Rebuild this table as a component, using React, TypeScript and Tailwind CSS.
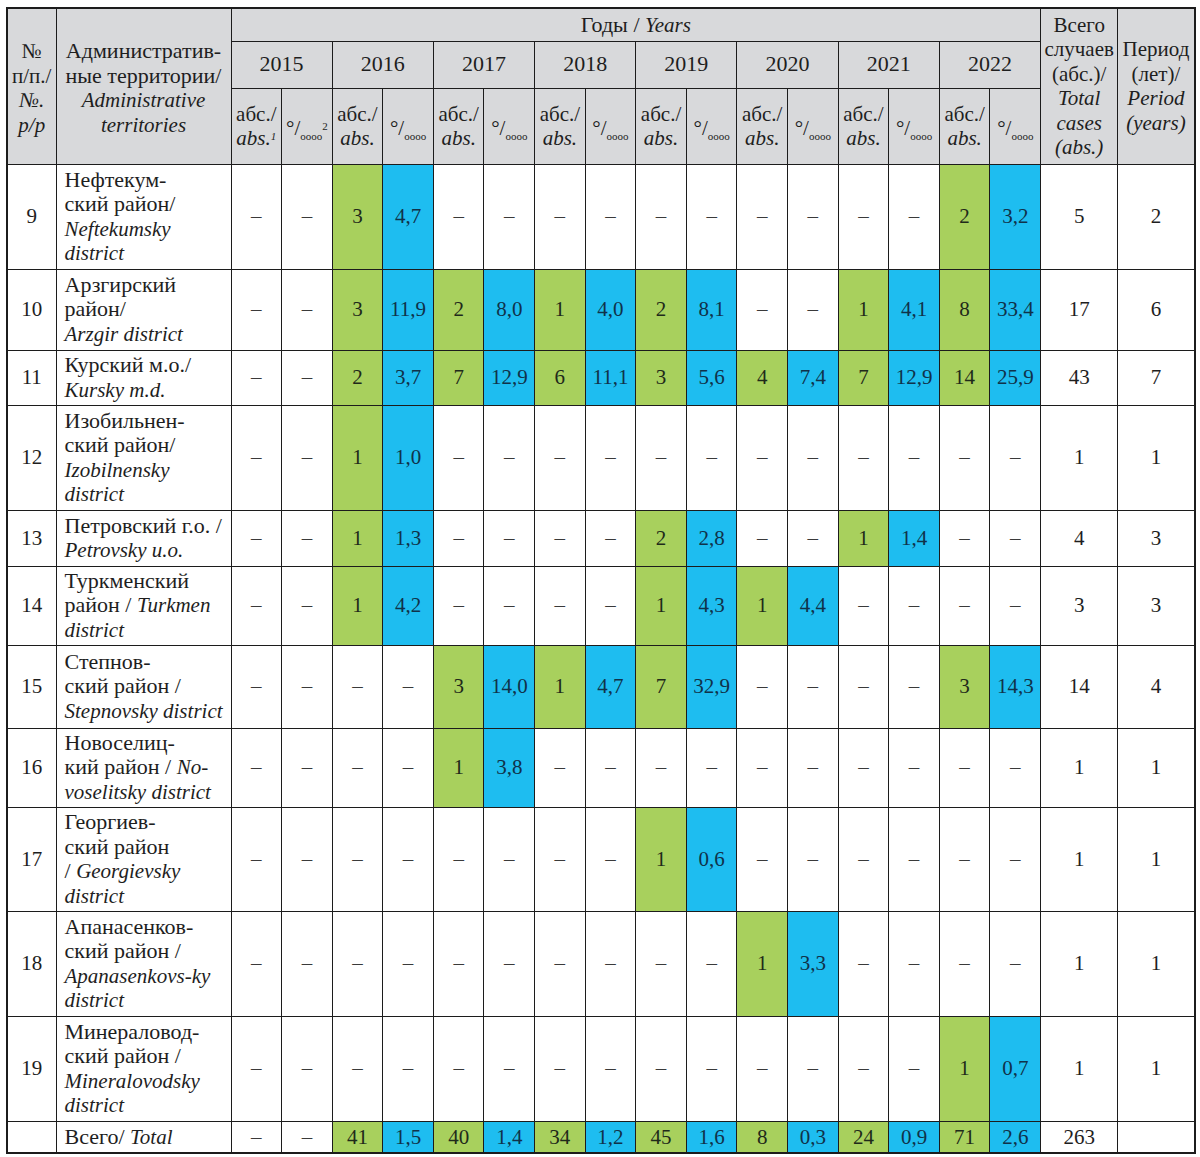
import React from "react";

type Pair = [string, string];

type Row = {
  num: string;
  name: React.ReactNode;
  h: string;
  years: Pair[];
  total: string;
  period: string;
};

const D: Pair = ["–", "–"];

// latin parts are italic and a touch smaller than the cyrillic
const it = (s: string) => <i className="text-[21px]">{s}</i>;

const rows: Row[] = [
  {
    num: "9",
    name: <>Нефтекум-<br />ский район/<br />{it("Neftekumsky")}<br />{it("district")}</>,
    h: "h-[105px]",
    years: [D, ["3", "4,7"], D, D, D, D, D, ["2", "3,2"]],
    total: "5",
    period: "2",
  },
  {
    num: "10",
    name: <>Арзгирский<br />район/<br />{it("Arzgir district")}</>,
    h: "h-[81px]",
    years: [D, ["3", "11,9"], ["2", "8,0"], ["1", "4,0"], ["2", "8,1"], D, ["1", "4,1"], ["8", "33,4"]],
    total: "17",
    period: "6",
  },
  {
    num: "11",
    name: <>Курский м.о./<br />{it("Kursky m.d.")}</>,
    h: "h-[55px]",
    years: [D, ["2", "3,7"], ["7", "12,9"], ["6", "11,1"], ["3", "5,6"], ["4", "7,4"], ["7", "12,9"], ["14", "25,9"]],
    total: "43",
    period: "7",
  },
  {
    num: "12",
    name: <>Изобильнен-<br />ский район/<br />{it("Izobilnensky")}<br />{it("district")}</>,
    h: "h-[105px]",
    years: [D, ["1", "1,0"], D, D, D, D, D, D],
    total: "1",
    period: "1",
  },
  {
    num: "13",
    name: <>Петровский г.о. /<br />{it("Petrovsky u.o.")}</>,
    h: "h-[56px]",
    years: [D, ["1", "1,3"], D, D, ["2", "2,8"], D, ["1", "1,4"], D],
    total: "4",
    period: "3",
  },
  {
    num: "14",
    name: <>Туркменский<br />район / {it("Turkmen")}<br />{it("district")}</>,
    h: "h-[79px]",
    years: [D, ["1", "4,2"], D, D, ["1", "4,3"], ["1", "4,4"], D, D],
    total: "3",
    period: "3",
  },
  {
    num: "15",
    name: <>Степнов-<br />ский район /<br />{it("Stepnovsky district")}</>,
    h: "h-[83px]",
    years: [D, D, ["3", "14,0"], ["1", "4,7"], ["7", "32,9"], D, D, ["3", "14,3"]],
    total: "14",
    period: "4",
  },
  {
    num: "16",
    name: <>Новоселиц-<br />кий район / {it("No-")}<br />{it("voselitsky district")}</>,
    h: "h-[79px]",
    years: [D, D, ["1", "3,8"], D, D, D, D, D],
    total: "1",
    period: "1",
  },
  {
    num: "17",
    name: <>Георгиев-<br />ский район<br />/ {it("Georgievsky")}<br />{it("district")}</>,
    h: "h-[104px]",
    years: [D, D, D, D, ["1", "0,6"], D, D, D],
    total: "1",
    period: "1",
  },
  {
    num: "18",
    name: <>Апанасенков-<br />ский район /<br />{it("Apanasenkovs-ky")}<br />{it("district")}</>,
    h: "h-[105px]",
    years: [D, D, D, D, D, ["1", "3,3"], D, D],
    total: "1",
    period: "1",
  },
  {
    num: "19",
    name: <>Минераловод-<br />ский район /<br />{it("Mineralovodsky")}<br />{it("district")}</>,
    h: "h-[105px]",
    years: [D, D, D, D, D, D, D, ["1", "0,7"]],
    total: "1",
    period: "1",
  },
];

const totals: Pair[] = [D, ["41", "1,5"], ["40", "1,4"], ["34", "1,2"], ["45", "1,6"], ["8", "0,3"], ["24", "0,9"], ["71", "2,6"]];

const yearsList = ["2015", "2016", "2017", "2018", "2019", "2020", "2021", "2022"];

const bd = "border border-[#1c1c1c]";
const hd = `${bd} bg-[#d8d9db] font-normal align-middle text-center`;

function PerMille({ sup }: { sup?: string }) {
  return (
    <span className="whitespace-nowrap">
      °/<span className="text-[11px] relative top-[5px]">oooo</span>
      {sup && <sup className="text-[11px]">{sup}</sup>}
    </span>
  );
}

function ValueCells({ pair }: { pair: Pair }) {
  const [a, p] = pair;
  const filled = a !== "–";
  return (
    <>
      <td className={`${bd} text-center text-[21px] ${filled ? "bg-[#a8d05d] text-[#1f2a1a]" : "text-[#3a3a3a]"}`}>{a}</td>
      <td className={`${bd} text-center text-[21px] ${filled ? "bg-[#1ebdf0] text-[#10324a]" : "text-[#3a3a3a]"}`}>{p}</td>
    </>
  );
}

export default function App() {
  return (
    <div className="w-[1200px] h-[1157px] bg-white pt-[7px] pl-[6px] text-[#1e1e1e]">
      <table className="table-fixed border-collapse w-[1188px] border-2 border-[#1c1c1c] font-['Liberation_Serif',serif] text-[20px] leading-[24.5px]">
        <colgroup>
          <col className="w-[49px]" />
          <col className="w-[175px]" />
          {Array.from({ length: 16 }).map((_, i) => (
            <col key={i} className="w-[50.6px]" />
          ))}
          <col className="w-[77px]" />
          <col className="w-[77px]" />
        </colgroup>
        <thead>
          <tr className="h-[33px]">
            <th rowSpan={3} className={`${hd} pt-[4px] text-[21px]`}>
              №<br />п/п./<br />{it("№.")}<br />{it("p/p")}
            </th>
            <th rowSpan={3} className={`${hd} pt-[4px] text-[22px] whitespace-nowrap`}>
              Административ-<br />ные территории/<br />{it("Administrative")}<br />{it("territories")}
            </th>
            <th colSpan={16} className={`${hd} text-[22px]`}>
              Годы / {it("Years")}
            </th>
            <th rowSpan={3} className={`${hd} whitespace-nowrap text-[21px]`}>
              Всего<br />случаев<br />(абс.)/<br />{it("Total")}<br />{it("cases")}<br />{it("(abs.)")}
            </th>
            <th rowSpan={3} className={`${hd} whitespace-nowrap text-[21px]`}>
              Период<br />(лет)/<br />{it("Period")}<br />{it("(years)")}
            </th>
          </tr>
          <tr className="h-[47px]">
            {yearsList.map((y) => (
              <th key={y} colSpan={2} className={`${hd} text-[22px]`}>
                {y}
              </th>
            ))}
          </tr>
          <tr className="h-[76px]">
            {yearsList.map((y, i) => (
              <React.Fragment key={y}>
                <th className={`${hd} whitespace-nowrap text-[21px]`}>
                  абс./<br />
                  <i>abs.</i>
                  {i === 0 && <sup className="text-[11px] italic">1</sup>}
                </th>
                <th className={`${hd} pt-[8px] text-[21px]`}>
                  <PerMille sup={i === 0 ? "2" : undefined} />
                </th>
              </React.Fragment>
            ))}
          </tr>
        </thead>
        <tbody>
          {rows.map((r) => (
            <tr key={r.num} className={r.h}>
              <td className={`${bd} text-center text-[21px]`}>{r.num}</td>
              <td className={`${bd} pl-[8px] whitespace-nowrap align-middle text-[22px]`}>{r.name}</td>
              {r.years.map((p, i) => (
                <ValueCells key={i} pair={p} />
              ))}
              <td className={`${bd} text-center text-[21px]`}>{r.total}</td>
              <td className={`${bd} text-center text-[21px]`}>{r.period}</td>
            </tr>
          ))}
          <tr className="h-[32px]">
            <td className={bd}></td>
            <td className={`${bd} pl-[8px] whitespace-nowrap text-[22px]`}>
              Всего/ {it("Total")}
            </td>
            {totals.map((p, i) => (
              <ValueCells key={i} pair={p} />
            ))}
            <td className={`${bd} text-center text-[21px]`}>263</td>
            <td className={bd}></td>
          </tr>
        </tbody>
      </table>
    </div>
  );
}
